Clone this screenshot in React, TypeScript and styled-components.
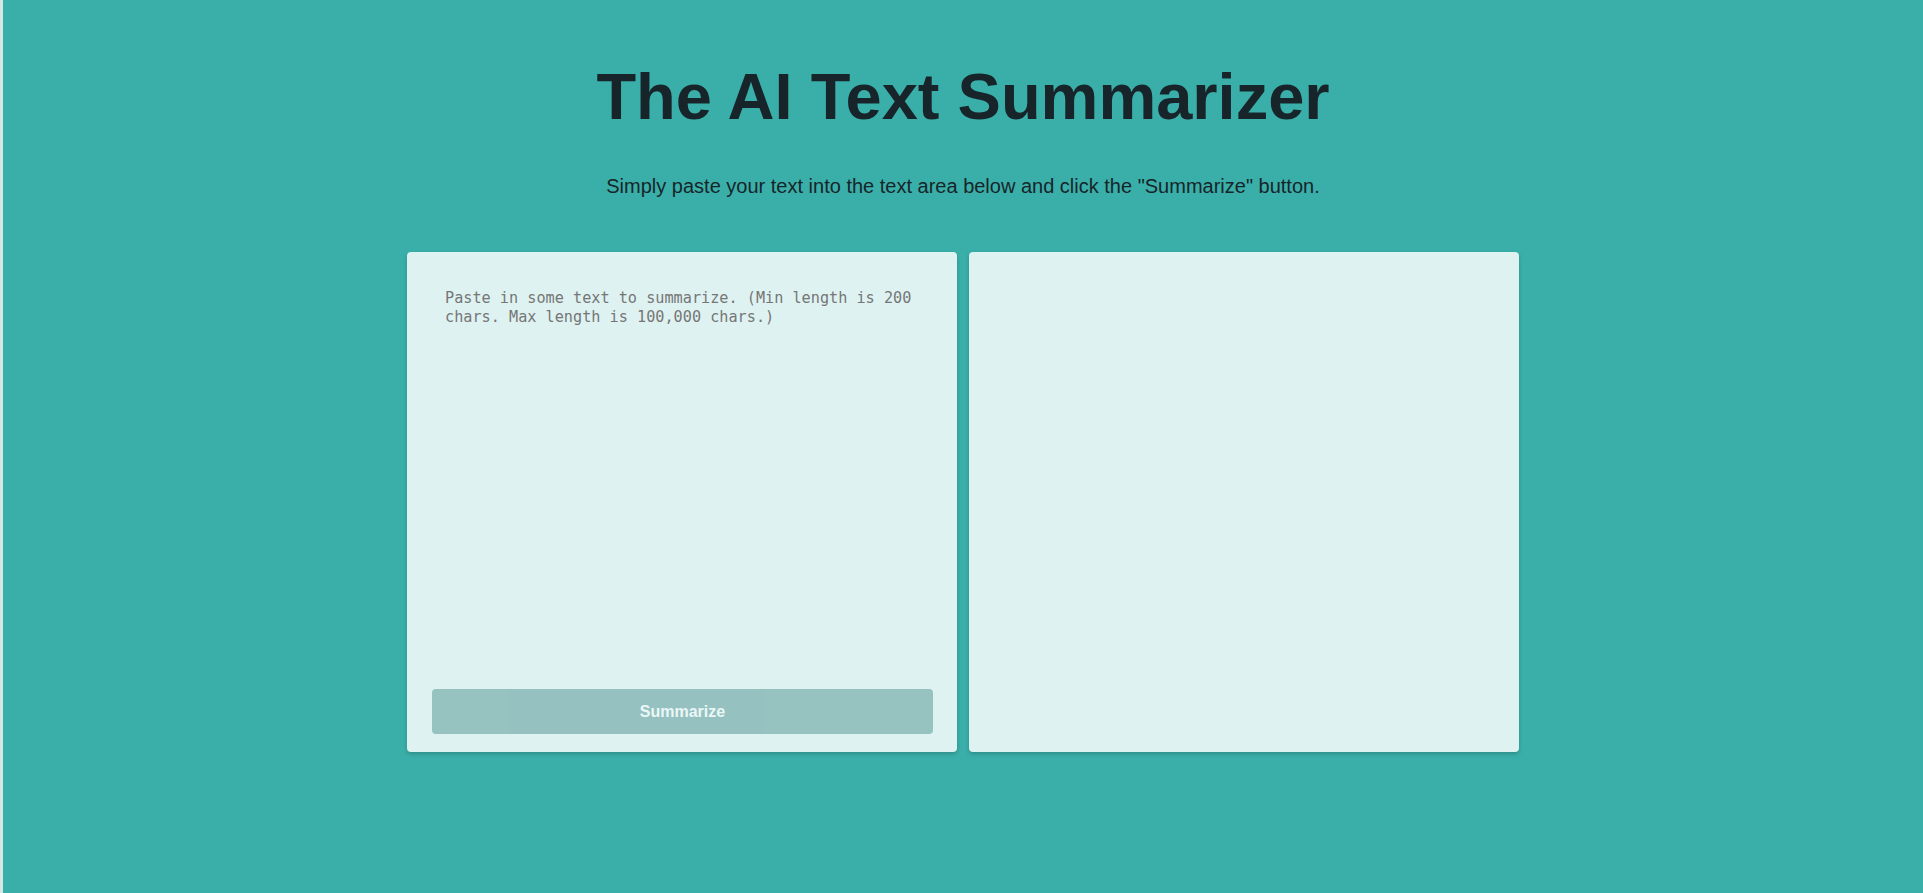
import React, { useState } from 'react';
import styled, { createGlobalStyle } from 'styled-components';

const GlobalStyle = createGlobalStyle`
  * {
    box-sizing: border-box;
  }

  body {
    margin: 0;
    background: #3aafa9;
    font-family: 'Liberation Sans', Arial, sans-serif;
  }
`;

function App() {
  const [text, setText] = useState('');
  const tooShort = text.length < 200;

  return (
    <Wrap>
      <GlobalStyle />
      <Header>
        <Title>The AI Text Summarizer</Title>
        <Subtitle>
          Simply paste your text into the text area below and click the
          "Summarize" button.
        </Subtitle>
      </Header>
      <Panels>
        <InputPanel onSubmit={(e) => e.preventDefault()}>
          <TextInput
            value={text}
            onChange={(e) => setText(e.target.value)}
            placeholder="Paste in some text to summarize. (Min length is 200 chars. Max length is 100,000 chars.)"
          />
          <SubmitButton type="submit" disabled={tooShort}>
            Summarize
          </SubmitButton>
        </InputPanel>
        <OutputPanel />
      </Panels>
    </Wrap>
  );
}

export default App;

const Wrap = styled.div`
  min-height: 100vh;
  border-left: 3px solid #d6e6e5;
  display: flex;
  flex-direction: column;
  align-items: center;
`;

const Header = styled.header`
  display: flex;
  flex-direction: column;
  align-items: center;
  padding-top: 59px;
`;

const Title = styled.h1`
  margin: 0;
  font-size: 65px;
  font-weight: bold;
  color: #17252a;
`;

const Subtitle = styled.p`
  margin: 41px 0 0;
  font-size: 20px;
  color: #17252a;
`;

const Panels = styled.main`
  display: grid;
  grid-template-columns: 550px 550px;
  gap: 12px;
  margin-top: 54px;
`;

const Card = styled.div`
  height: 500px;
  background: #def2f1;
  border-radius: 4px;
  box-shadow: 0 2px 4px rgba(0, 0, 0, 0.2);
`;

const InputPanel = styled(Card).attrs({ as: 'form' })`
  display: flex;
  flex-direction: column;
  padding: 20px 24px 18px 25px;
`;

const OutputPanel = styled(Card)``;

const TextInput = styled.textarea`
  flex: 1;
  border: none;
  outline: none;
  resize: none;
  background: transparent;
  padding: 17px 13px;
  font-family: 'DejaVu Sans Mono', 'Liberation Mono', monospace;
  font-size: 15.2px;
  line-height: 19px;
  color: #17252a;

  &::placeholder {
    color: #767676;
  }
`;

const SubmitButton = styled.button`
  height: 45px;
  margin-top: 8px;
  border: none;
  border-radius: 4px;
  background: #2b7a78;
  color: #feffff;
  font-family: 'Liberation Sans', Arial, sans-serif;
  font-size: 16px;
  font-weight: bold;
  cursor: pointer;

  &:disabled {
    opacity: 0.4;
    cursor: default;
  }
`;
